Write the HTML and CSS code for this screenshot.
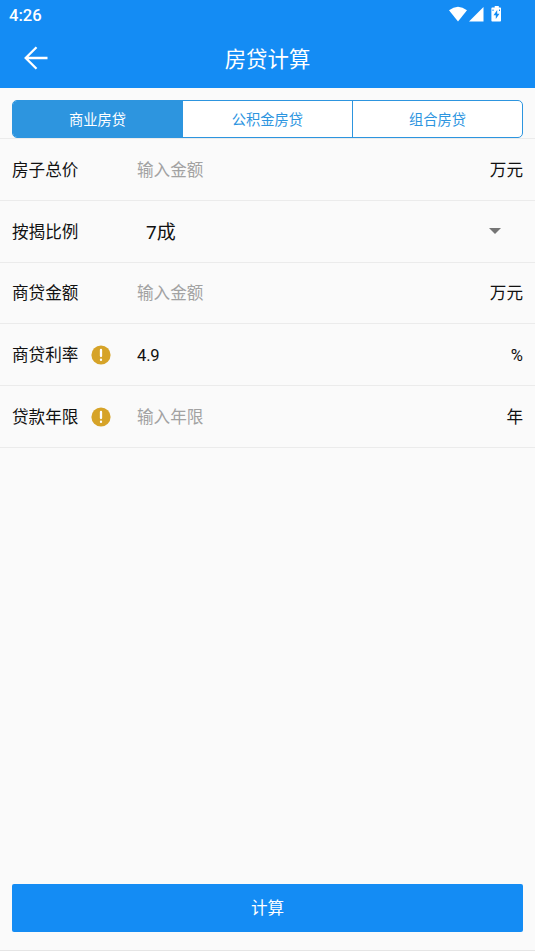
FILE: index.html
```html
<!DOCTYPE html>
<html lang="zh-CN">
<head>
<meta charset="utf-8">
<title>房贷计算</title>
<link rel="stylesheet" href="styles.css">
</head>
<body>
<div class="screen">
  <header class="header">
    <div class="status">
      <span class="time">4:26</span>
      <svg class="status-icons" width="54" height="16" viewBox="0 0 54 16" fill="#fff">
        <path d="M0 4.2Q9-2.8 18 4.2L9 15.5Z"/>
        <path d="M34.5 1V15.5H20Z"/>
        <path fill-rule="evenodd" d="M45.7 0h4.1v1.500h1.500q.7 0 .7.8v12.400q0 .8-.8.8h-8q-.8 0-.8-.8V2.300q0-.8.8-.8h2.500zM48.200 4l-3.700 5.200h2.300V13l3.700-5.200h-2.300z"/>
        <path d="M44 3.500v1.500M50.500 3.500v1.500" stroke="#148cf4" stroke-width="1"/>
      </svg>
    </div>
    <div class="toolbar">
      <svg class="back" width="24" height="24" viewBox="0 0 24 24" fill="none" stroke="#fff" stroke-width="2.300"><path d="M12.500 1.200 1.700 12l10.800 10.800M1.700 12H23.500"/></svg>
      <h1 class="title">房贷计算</h1>
    </div>
  </header>
  <nav class="tabs">
    <div class="tab active">商业房贷</div>
    <div class="tab">公积金房贷</div>
    <div class="tab">组合房贷</div>
  </nav>
  <main class="form">
    <div class="row"><div class="label">房子总价</div><div class="value hint">输入金额</div><div class="unit">万元</div></div>
    <div class="row"><div class="label">按揭比例</div><div class="value select">7成</div><svg class="caret" width="12" height="6" viewBox="0 0 12 6"><path d="M0 0h12L6 6z" fill="#757575"/></svg></div>
    <div class="row"><div class="label">商贷金额</div><div class="value hint">输入金额</div><div class="unit">万元</div></div>
    <div class="row"><div class="label">商贷利率<svg class="info" width="20" height="20" viewBox="0 0 20 20"><circle cx="10" cy="10" r="9.600" fill="#d6a328"/><path d="M10 5v6M10 14.700v.2" stroke="#fff" stroke-width="2.300" stroke-linecap="round"/></svg></div><div class="value number">4.9</div><div class="unit percent">%</div></div>
    <div class="row"><div class="label">贷款年限<svg class="info" width="20" height="20" viewBox="0 0 20 20"><circle cx="10" cy="10" r="9.600" fill="#d6a328"/><path d="M10 5v6M10 14.700v.2" stroke="#fff" stroke-width="2.300" stroke-linecap="round"/></svg></div><div class="value hint">输入年限</div><div class="unit">年</div></div>
  </main>
  <footer class="footer"><div class="submit">计算</div></footer>
</div>
</body>
</html>
```
FILE: styles.css
```css
* { box-sizing: border-box; }
body { margin: 0; background: #fafafa; color: #111; font-family: Roboto, "Noto Sans CJK SC", sans-serif; }
.screen { display: flex; flex-direction: column; height: 951px; overflow: hidden; }
.header { height: 88px; background: #148cf4; color: #fff; }
.status { display: flex; justify-content: space-between; height: 29px; padding: 6px 32px 0 9px; }
.time { font-size: 16.6px; font-weight: 500; line-height: 20px; }
.status-icons { display: block; }
.toolbar { display: grid; grid-template-columns: 24px 1fr 24px; align-items: center; height: 58px; padding: 0 24px; }
.back { display: block; }
.title { margin: 0; padding-top: 3px; font-size: 21.4px; font-weight: 400; line-height: 30px; text-align: center; }
.tabs { display: flex; height: 38px; margin: 12px 12px 0; border: 1px solid #2d95df; border-radius: 5px; background: #fff; overflow: hidden; }
.tab { flex: 1; color: #2d95df; font-size: 14.25px; line-height: 38px; text-align: center; }
.tab + .tab { border-left: 1px solid #2d95df; }
.active { background: #2d95df; color: #fff; }
.form { border-top: 1px solid #ebebeb; }
.row { display: flex; align-items: center; height: 61.8px; padding: 0 12px; border-bottom: 1px solid #ebebeb; font-size: 16.6px; line-height: 24px; }
.label { display: flex; align-items: center; width: 125px; }
.label, .hint, .unit { padding-top: 3px; }
.info { margin: -3px 0 0 13px; }
.value { flex: 1; }
.hint { color: #a2a2a2; }
.select { padding: 4px 0 0 9px; font-size: 19px; }
.number { padding-top: 2px; letter-spacing: -0.2px; }
.percent { padding-top: 2px; }
.caret { margin-right: 22px; }
.footer { display: flex; flex-direction: column; margin-top: auto; padding: 0 12px 18px; border-bottom: 1px solid #e5e5e5; }
.submit { height: 48px; padding-top: 1px; border-radius: 2px; background: #148cf4; color: #fff; font-size: 16.6px; line-height: 48px; text-align: center; }
```
